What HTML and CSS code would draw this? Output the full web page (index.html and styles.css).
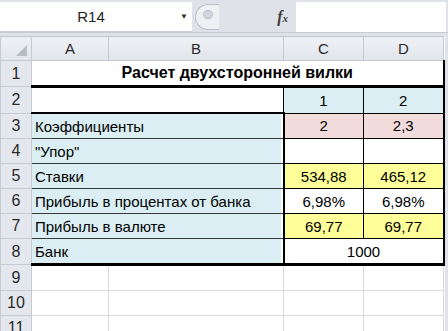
FILE: index.html
```html
<!DOCTYPE html>
<html lang="ru">
<head>
    <meta charset="UTF-8">
    <title>Расчет двухсторонней вилки</title>
    <link rel="stylesheet" href="styles.css">
</head>
<body>
    <div class="formula-bar">
        <div class="name-box">
            <span class="cell-ref">R14</span>
            <span class="drop">&#9660;</span>
        </div>
        <div class="fx-area">
            <span class="grip"><span class="dot"></span></span>
            <span class="fx"><i>f</i><i class="x">x</i></span>
        </div>
        <div class="formula-input"></div>
    </div>

    <table class="sheet">
        <colgroup>
            <col class="c-rh">
            <col class="c-a">
            <col class="c-b">
            <col class="c-c">
            <col class="c-d">
        </colgroup>
        <tr class="col-heads">
            <th class="corner"><span class="tri"></span></th>
            <th>A</th>
            <th>B</th>
            <th>C</th>
            <th>D</th>
        </tr>
        <tr>
            <th>1</th>
            <td colspan="4" class="title">Расчет двухсторонней вилки</td>
        </tr>
        <tr>
            <th>2</th>
            <td colspan="2" class="blank top-thick"></td>
            <td class="blue num top-thick">1</td>
            <td class="blue num top-thick">2</td>
        </tr>
        <tr>
            <th>3</th>
            <td colspan="2" class="blue label">Коэффициенты</td>
            <td class="pink num">2</td>
            <td class="pink num">2,3</td>
        </tr>
        <tr>
            <th>4</th>
            <td colspan="2" class="blue label">"Упор"</td>
            <td class="white num"></td>
            <td class="white num"></td>
        </tr>
        <tr>
            <th>5</th>
            <td colspan="2" class="blue label">Ставки</td>
            <td class="yellow num">534,88</td>
            <td class="yellow num">465,12</td>
        </tr>
        <tr>
            <th>6</th>
            <td colspan="2" class="blue label">Прибыль в процентах от банка</td>
            <td class="white num">6,98%</td>
            <td class="white num">6,98%</td>
        </tr>
        <tr>
            <th>7</th>
            <td colspan="2" class="blue label">Прибыль в валюте</td>
            <td class="yellow num">69,77</td>
            <td class="yellow num">69,77</td>
        </tr>
        <tr class="last">
            <th>8</th>
            <td colspan="2" class="blue label">Банк</td>
            <td colspan="2" class="white num">1000</td>
        </tr>
        <tr class="empty">
            <th>9</th><td></td><td></td><td></td><td></td>
        </tr>
        <tr class="empty">
            <th>10</th><td></td><td></td><td></td><td></td>
        </tr>
        <tr class="empty">
            <th>11</th><td></td><td></td><td></td><td></td>
        </tr>
    </table>
</body>
</html>
```

FILE: styles.css
```css
body {
    margin: 0;
    width: 448px;
    height: 331px;
    overflow: hidden;
    background: #dfe3e9;
    font-family: "Liberation Sans", Arial, sans-serif;
    font-size: 15px;
    color: #000;
}

/* formula bar */
.formula-bar {
    display: flex;
    height: 30px;
    padding-top: 2px;
    border-bottom: 1px solid #c6cbd2;
    margin-bottom: 3px;
}

.name-box {
    width: 192px;
    background: #fff;
    display: flex;
    align-items: center;
    border-bottom: 1px solid #c6cbd2;
    box-sizing: border-box;
}

.cell-ref {
    flex: 1;
    text-align: center;
    padding-left: 2px;
    font-size: 15px;
    color: #1e1e1e;
}

.drop {
    font-size: 8px;
    color: #333;
    width: 12px;
    text-align: left;
}

.fx-area {
    width: 104px;
    display: flex;
    align-items: center;
    justify-content: space-between;
    padding-left: 3px;
    padding-right: 8px;
    box-sizing: border-box;
}

.grip {
    width: 24px;
    height: 26px;
    border: 1px solid #b8bec7;
    border-right: none;
    border-radius: 13px 0 0 13px;
    background: #eef0f4;
    display: flex;
    align-items: flex-start;
    padding: 5px 0 0 7px;
    box-sizing: border-box;
}

.dot {
    width: 8px;
    height: 7px;
    border-radius: 50%;
    background: #d2d6dc;
    border: 1px solid #b9bec6;
}

.fx {
    font-family: "Liberation Serif", serif;
    font-weight: bold;
    font-size: 16px;
    color: #3c3c3c;
}

.fx .x {
    font-size: 11px;
}

.formula-input {
    flex: 1;
    background: #fff;
    margin-right: 2px;
}

/* sheet */
.sheet {
    border-collapse: collapse;
    table-layout: fixed;
    width: 443px;
    background: #fff;
}

.c-rh { width: 31px; }
.c-a { width: 77px; }
.c-b { width: 175px; }
.c-c { width: 80px; }
.c-d { width: 80px; }

.sheet th {
    background: #e4e8ee;
    border: 1px solid #c5cad1;
    font-weight: normal;
    color: #2a2a2a;
    height: 24px;
    padding: 0;
    text-align: center;
    font-size: 16px;
}

.sheet .col-heads th {
    height: 23px;
    font-size: 15px;
    background: linear-gradient(#eef1f5, #e1e5eb);
}

.corner {
    position: relative;
}

.tri {
    position: absolute;
    right: 4px;
    bottom: 4px;
    width: 0;
    height: 0;
    border-left: 11px solid transparent;
    border-bottom: 11px solid #b7bcc4;
}

.sheet td {
    border: 1px solid #d9d9d9;
    padding: 0 3px;
    height: 24px;
    white-space: nowrap;
    overflow: hidden;
}

.sheet td.title {
    text-align: center;
    font-weight: bold;
    font-size: 16px;
    background: #fff;
    border-bottom: 3px solid #000;
    border-right: 2px solid #000;
    border-top: 1px solid #c5cad1;
}

.sheet td.blank {
    background: #fff;
    border-right: 1px solid #000;
    border-bottom: 2px solid #000;
}

.sheet td.blue {
    background: #daeef3;
}

.sheet td.label {
    border-top: 1px solid #3a3a3a;
    border-bottom: 1px solid #3a3a3a;
    border-right: 2px solid #000;
    box-shadow: inset -2px 0 0 #fff;
}

.sheet td.num {
    text-align: center;
    border: 1px solid #000;
}

.sheet td:last-child.num {
    border-right: 2px solid #000;
}

.sheet td.pink { background: #f2dcdb; }
.sheet td.yellow { background: #ffff99; }
.sheet td.white { background: #fff; }

.sheet .last td {
    border-bottom: 3px solid #000;
}

.sheet .empty td {
    border: 1px solid #dadada;
    height: 24px;
}
```
